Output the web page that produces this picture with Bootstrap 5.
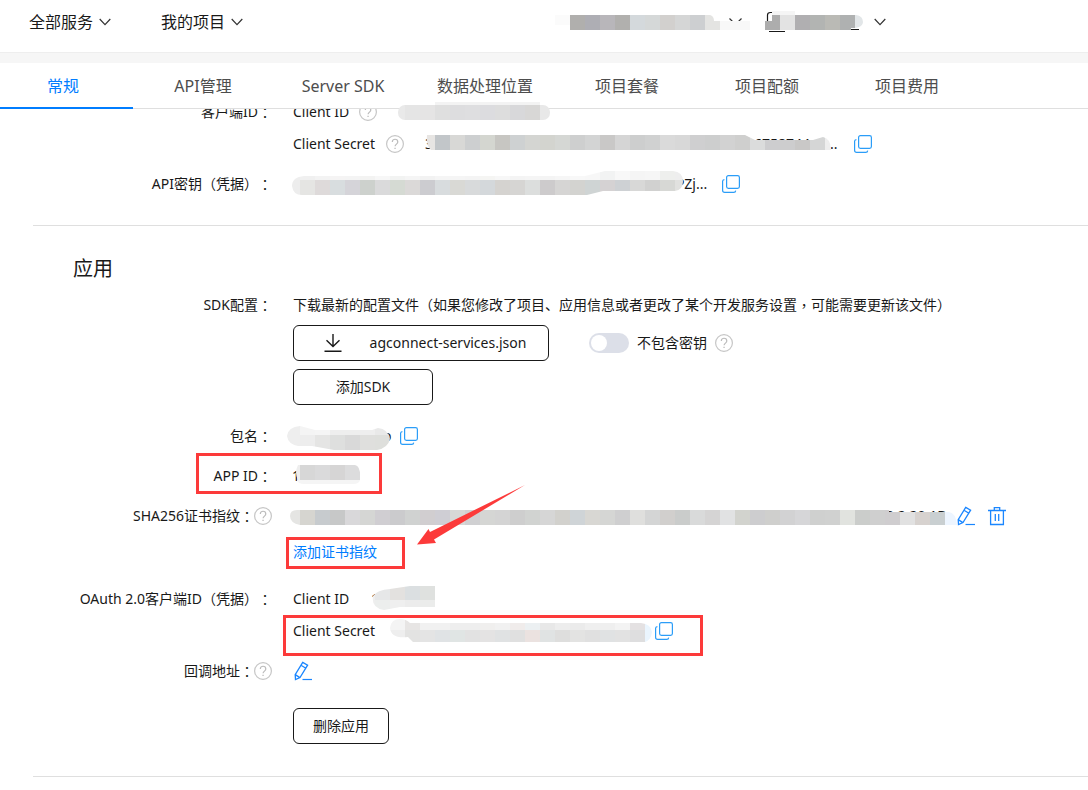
<!DOCTYPE html>
<html lang="zh-CN">
<head>
<meta charset="utf-8">
<meta name="viewport" content="width=device-width, initial-scale=1">
<title>项目设置</title>
<link href="https://cdn.jsdelivr.net/npm/bootstrap@5.3.0/dist/css/bootstrap.min.css" rel="stylesheet">
<style>
  body { font-family: "Noto Sans", "Noto Sans CJK SC", sans-serif; font-size: 14px; line-height: 24px; color: #191919; background: #fff; overflow-x: hidden; }
  a { color: #007dff; text-decoration: none; }
  svg { flex: none; overflow: visible; }
  svg text { font-size: 14px; fill: #191919; }
  .punct { font-family: "Noto Sans CJK TC", sans-serif; line-height: 1; }

  .topbar { height: 52px; padding: 0 202px 8px 29px; }
  .menu-btn { border: 0; background: none; padding: 0; font-size: 16px; color: #191919; display: flex; align-items: center; gap: 6px; white-space: nowrap; }
  .menu-gap { gap: 50px; }
  .strip { height: 11px; background: #f6f6f6; border-top: 1px solid #eee; }

  .tabs { height: 46px; border-bottom: 1px solid #dfdfdf; background: #fff; z-index: 1; }
  .tabs a { min-width: 140px; padding: 0 24px; font-size: 16px; line-height: 46px; height: 46px; color: #4d4d4d; text-align: center; white-space: nowrap; }
  .tabs a.active { min-width: 133px; padding: 0 31px 0 24px; color: #007dff; border-bottom: 2px solid #007dff; }

  .sheet { margin-top: -9px; }
  .field { display: flex; gap: 21px; margin-bottom: 16px; position: relative; white-space: nowrap; }
  .field-name { width: 272px; flex: none; display: flex; justify-content: flex-end; align-items: center; height: 24px; }
  .line { display: flex; align-items: center; height: 24px; position: relative; }
  .key-id { width: 58px; }
  .key-secret { width: 85px; }
  .over { z-index: 2; position: relative; }
  .rule { margin: 29px 0 0 33px; height: 1px; background: #dfdfdf; }
  .title { font-size: 20px; line-height: 30px; font-weight: 400; margin: 28px 0 9px 73px; }
  .sdk-field { margin-bottom: 19px; }
  .cert-field { margin-bottom: 23px; }
  .cert-link { margin-top: 12px; }
  .callback-field { margin-bottom: 25px; }
  .rule-end { margin-top: 32px; }

  .icon-btn { border: 0; background: none; padding: 0; display: flex; }
  .icon-pair { gap: 13px; }
  .box-btn { height: 36px; border: 1px solid #191919; border-radius: 6px; background: #fff; color: #191919; font-size: 14px; padding: 0; display: flex; align-items: center; justify-content: center; }
  .w-json { width: 256px; gap: 28px; padding-left: 8px; }
  .w-sdk { width: 140px; }
  .w-del { width: 96px; }
  .sdk-switch { margin-left: 40px; }
  .form-switch .toggle { width: 40px; height: 20px; margin: 0; border: 0; background-color: #dcdfe8; float: none; background-size: 18px 18px; background-position: 1px center; background-image: url("data:image/svg+xml,%3csvg xmlns='http://www.w3.org/2000/svg' viewBox='0 0 18 18'%3e%3ccircle cx='9' cy='9' r='8' fill='white'/%3e%3c/svg%3e"); }

  /* annotations lying over the form */
  .frame { position: absolute; border: 3px solid #fc3a3a; pointer-events: none; }
  .frame-app { left: 196px; top: -11px; width: 186px; height: 41px; }
  .frame-link { left: -7px; top: -3px; width: 119px; height: 32px; }
  .frame-secret { left: -10px; top: -4px; width: 420px; height: 41px; }
  .arrow { position: absolute; left: 124px; top: -55px; }
</style>
</head>
<body>
<svg width="0" height="0" class="position-absolute" aria-hidden="true">
  <defs>
    <symbol id="chev" viewBox="0 0 12 8"><path d="M.7 1 6 6.600 11.300 1" fill="none" stroke="#333" stroke-width="1.200"/></symbol>
    <symbol id="help" viewBox="0 0 18 18"><circle cx="9" cy="9" r="8.400" fill="none" stroke="#c6c6c6" stroke-width="1.200"/><path d="M6.300 7c0-3.700 5.500-3.700 5.500 0 0 2-2.700 2.200-2.700 4.300" fill="none" stroke="#bcbcbc" stroke-width="1.200"/><path d="M8.400 12.800h1.300v1.300H8.400z" fill="#bcbcbc"/></symbol>
    <symbol id="copy" viewBox="0 0 18 18"><rect x="4.600" y=".6" width="12.800" height="12.800" rx="1.800" fill="none" stroke="#2b9df8" stroke-width="1.200"/><path d="M2.400 4.600Q.6 4.700.6 6.300v9q0 2.100 2.100 2.100h9q1.900 0 2-1.800" fill="none" stroke="#2b9df8" stroke-width="1.200"/></symbol>
    <symbol id="pen" viewBox="0 0 18 20"><path d="M8.700 1.400 13.600 4.200 6 16.600 1.500 18.500 1.200 13.600zM7 4.300l4.900 2.900M1.200 13.600l4.700 3" fill="none" stroke="#1a86ff" stroke-width="1.300"/><path d="M8.500 18.500H18" stroke="#1a86ff" stroke-width="1.200"/></symbol>
    <symbol id="bin" viewBox="0 0 18 20"><path d="M0 4.500h18M2.600 4.500v14h12.800v-14M6.300 4.500V1.700h5.400v2.800M7.300 8v7M10.700 8v7" fill="none" stroke="#1a86ff" stroke-width="1.300"/></symbol>
  </defs>
</svg>

<header class="topbar d-flex align-items-center justify-content-between">
  <div class="d-flex menu-gap">
    <button type="button" class="menu-btn">全部服务<svg width="12" height="8"><use href="#chev"/></svg></button>
    <button type="button" class="menu-btn">我的项目<svg width="12" height="8"><use href="#chev"/></svg></button>
  </div>
  <div class="d-flex">
    <button type="button" class="menu-btn" aria-label="项目">
      <svg width="210" height="24" viewBox="555 10 210 24">
        <path d="M729.500 18.500l6 6 6-6" fill="none" stroke="#333" stroke-width="1.200"/>
        <path d="M731 15h9v4h-9z" fill="#fff"/>
        <clipPath id="m1"><path d="M555 15h155q4 1 4 6h36v9H570v-5h-15z"/></clipPath>
        <g clip-path="url(#m1)"><g class="cells" data-x="555" data-y="15" data-h="15" data-c="fbfbfb b0afad aeaeb4 b8b6ba b1b0ae d4d9dc d5d8d8 d2d0ce d5d6d6 cdcfd1 e4e4e2 f8f8f8 f8f8f8"/></g>
      </svg>
    </button>
    <button type="button" class="menu-btn" aria-label="应用">
      <svg width="103" height="24" viewBox="765 10 103 24">
        <path d="M767.500 22v-7q0-2.500 3-2.500h2M769 31.500h16M845 29.500h14" fill="none" stroke="#191919" stroke-width="1.200"/>
        <path d="M772 11h23v4h-23z" fill="#f5f5f5"/>
        <clipPath id="m2"><path d="M765 21h7v-6h84q7 1 7 7 0 5-8 6h-4v2h-86z"/></clipPath>
        <g class="cells" clip-path="url(#m2)" data-x="765" data-y="15" data-h="15" data-c="adadad e3e3e3 b0afb1 b2b4b2 babab5 afb1b1 e2e6e8"/>
      </svg><svg width="12" height="8"><use href="#chev"/></svg>
    </button>
  </div>
</header>
<div class="strip"></div>

<nav class="tabs d-flex position-relative">
  <a href="#" class="active">常规</a>
  <a href="#">API管理</a>
  <a href="#">Server SDK</a>
  <a href="#">数据处理位置</a>
  <a href="#">项目套餐</a>
  <a href="#">项目配额</a>
  <a href="#">项目费用</a>
</nav>

<main class="sheet">
  <section>
    <div class="field">
      <div class="field-name">客户端ID<span class="punct">：</span></div>
      <div class="d-flex flex-column gap-2">
        <div class="line"><span class="key-id">Client ID</span>
          <svg class="ms-2" width="18" height="18"><use href="#help"/></svg>
          <svg class="over" width="172" height="24" viewBox="377 100 172 24">
            <path d="M435 102h105v6H435z" fill="#f3f3f3"/>
            <clipPath id="m3"><rect x="398" y="105" width="152" height="15" rx="7"/></clipPath>
            <g class="cells" clip-path="url(#m3)" data-x="390" data-y="105" data-h="15" data-c="e9e9e9 e5e5e5 e5e4e4 dfdfdf dddddf dedee0 dcdcdf dddddd d8d8da d8d7d6 e8e8e8"/>
          </svg>
        </div>
        <div class="line"><span class="key-secret">Client Secret</span>
          <svg class="ms-2" width="18" height="18"><use href="#help"/></svg>
          <svg width="450" height="24" viewBox="404 132 450 24">
            <text x="425" y="149">3</text><text x="754" y="149">6758744</text><text x="830" y="149">..</text>
            <clipPath id="m4"><path d="M427 135h318l10 5h58l10-3q7 1 8 12v1H431q-5-4-4-15z"/></clipPath>
            <g class="cells" clip-path="url(#m4)" data-x="420" data-y="135" data-h="15" data-c="e7e5e3 c2c6c9 d8d8d6 cdcfd0 d4d6d0 c7c6c2 ced1d2 d4d5d2 d3d4cf d5d7d4 cecfcf d3d4d4 c9c8c7 d5d5d5 cdcece d0d1d1 dadada d8d8d8 cfcfd0 cdcece d2d2d2 cfcfce dbdcdc cdcdcf cdcdce c9c8c7 d5d6d6 eee"/>
          </svg>
          <button type="button" class="icon-btn" aria-label="复制"><svg width="18" height="18"><use href="#copy"/></svg></button>
        </div>
      </div>
    </div>
    <div class="field mb-0">
      <div class="field-name">API密钥（凭据）<span class="punct">：</span></div>
      <div class="line">
        <svg width="429" height="24" viewBox="293 172 429 24">
          <text x="676" y="189">PZj...</text>
          <clipPath id="m5"><path d="M292 186q0-9 12-10h281l20-5h68q10 1 10 10 0 9-8 10h-72l-16 4H302q-9 0-10-9z"/></clipPath>
          <g clip-path="url(#m5)">
            <g class="cells" data-x="285" data-y="165" data-h="15" data-c="eee f0f0f0 f3f3f3 f5f4f4 f4f4f4 f3f3f2 f7f7f7 f2f3f2 f5f5f5 f2f2f2 f5f5f5 f5f5f5 f4f4f4 f5f5f3 f7f7f7 f4f4f4 f5f5f5 f4f4f4 f6f6f6 f8f8f8 f7f7f7 f2f3f3 f8f8f8 f5f5f5 f6f6f6 eeefed eee"/>
            <g class="cells" data-x="285" data-y="180" data-h="15" data-c="ededed e5e5e3 dedada d8dddf d5d4d9 cdd1cd dadadb d5dad3 dbd9d8 ccccd0 d8dcde d9d9d5 d8dadb d4d8db d5d3d0 d6d5d3 dcdedd cdcbcc d6d5d4 d3d3d0 cfd4d4 d5d2d3 ced1d4 d8d8d7 d1d1d0 d7d8d5 e1e1df"/>
          </g>
        </svg>
        <button type="button" class="icon-btn" aria-label="复制"><svg width="18" height="18"><use href="#copy"/></svg></button>
      </div>
    </div>
    <hr class="rule border-0 opacity-100">
  </section>

  <section>
    <h2 class="title">应用</h2>
    <div class="field sdk-field">
      <div class="field-name">SDK配置<span class="punct">：</span></div>
      <div class="d-flex flex-column gap-2">
        <div class="line">下载最新的配置文件（如果您修改了项目、应用信息或者更改了某个开发服务设置<span class="punct">，</span>可能需要更新该文件）</div>
        <div class="d-flex align-items-center">
          <button type="button" class="box-btn w-json"><svg width="18" height="18" viewBox="0 0 18 18"><path d="M9 0v12.500M2.500 6.300 9 12.500l6.500-6.200M.5 17.200h17" fill="none" stroke="#191919" stroke-width="1.400"/></svg>agconnect-services.json</button>
          <div class="form-check form-switch d-flex align-items-center gap-2 p-0 mb-0 sdk-switch">
            <input class="form-check-input toggle" type="checkbox" role="switch" id="nokey"><label for="nokey">不包含密钥</label>
            <svg width="18" height="18"><use href="#help"/></svg>
          </div>
        </div>
        <button type="button" class="box-btn w-sdk">添加SDK</button>
      </div>
    </div>
    <div class="field">
      <div class="field-name">包名<span class="punct">：</span></div>
      <div class="line">
        <svg width="107" height="24" viewBox="293 424 107 24">
          <text x="383" y="441">o</text>
          <clipPath id="m6"><path d="M287 436q1-9 13-10l15 4h57l6-2q10 1 12 11-2 9-13 11h-43l-22-4h-14q-10-2-11-10z"/></clipPath>
          <g clip-path="url(#m6)">
            <g class="cells" data-x="285" data-y="425" data-h="10" data-c="eee f4f4f4 f5f5f5 eee eee eee e9e9e9"/>
            <g class="cells" data-x="285" data-y="435" data-h="15" data-c="eee ededed e5e5e4 dedfde d9d9d9 dfdfdd dedfdc"/>
          </g>
        </svg>
        <button type="button" class="icon-btn" aria-label="复制"><svg width="18" height="18"><use href="#copy"/></svg></button>
      </div>
    </div>
    <div class="field">
      <div class="field-name">APP ID<span class="punct">：</span></div>
      <div class="line">
        <svg width="68" height="24" viewBox="293 464 68 24">
          <text x="292" y="481">1</text>
          <path d="M297 480h63q-1 4-7 4h-49q-6 0-7-4z" fill="#f5f5f5"/>
          <clipPath id="m7"><path d="M298 465h57q6 1 5 15h-62q-4-7 0-15z"/></clipPath>
          <g class="cells" clip-path="url(#m7)" data-x="285" data-y="465" data-h="15" data-c="eee d7d7d7 dadadb d6d5d5 dcdcdd"/>
        </svg>
      </div>
      <div class="frame frame-app"></div>
    </div>
    <div class="field cert-field">
      <div class="field-name">SHA256证书指纹<span class="punct">：</span><svg width="18" height="18"><use href="#help"/></svg></div>
      <div>
        <div class="line">
          <svg width="664" height="24" viewBox="293 504 664 24">
            <text x="886" y="521">0:2:20:1D</text>
            <clipPath id="m8"><path d="M290 516q0-6 7-6h592v2h60q7 1 8 13H300q-10-2-10-9z"/></clipPath>
            <g clip-path="url(#m8)">
              <g class="cells" data-x="285" data-y="510" data-h="15" data-c="e5e5e3 d6d5d0 c7cbce c7c8c8 d9d8da d5d6d4 d0ced2 cbcbcd d0d2d1 d1ced0 cfced4 d7d8d6 d0d0d2 d5d6d4 d4d4d4 cecece d1d3d1 d6d6d6 d2d1cd cfd4d7 d8d7d3 d5d6d4 cfcfd0 dfdfdd d4d5d5 d1cfcd cacccb d9dada d5d4d4 e1e2e3 d2d3ce cdcdcf cfcfcd d2d2d3 d6d6d8 cfd0cf d0d1d0 e1e3df cbcdcb cfcfcf cfcdcf e1e1e1 d7d2cf c9cfd1 edf5ff"/>
            </g>
          </svg>
          <div class="d-flex icon-pair">
            <button type="button" class="icon-btn" aria-label="编辑"><svg width="18" height="20"><use href="#pen"/></svg></button>
            <button type="button" class="icon-btn" aria-label="删除"><svg width="18" height="20"><use href="#bin"/></svg></button>
          </div>
        </div>
        <div class="line cert-link">
          <a href="#">添加证书指纹</a>
          <div class="frame frame-link"></div>
          <svg class="arrow" width="108" height="60" viewBox="417 485 108 60" aria-hidden="true"><path d="M525 485 434 539.500 436 543 417 544.500 428.500 529 430 532z" fill="#fc3a3a"/></svg>
        </div>
      </div>
    </div>
    <div class="field">
      <div class="field-name">OAuth 2.0客户端ID（凭据）<span class="punct">：</span></div>
      <div class="d-flex flex-column gap-2">
        <div class="line"><span class="key-id">Client ID</span>
          <svg width="84" height="24" viewBox="351 587 84 24">
            <text x="371" y="604">1</text>
            <clipPath id="m9"><path d="M373 596q4-6 17-7l20-3h25v21h-35l-16 3q-13-2-11-14z"/></clipPath>
            <g clip-path="url(#m9)">
              <g class="cells" data-x="360" data-y="585" data-h="15" data-c="eee e6e7e8 e3e1df dbdfe1 dfe1df"/>
              <g class="cells" data-x="360" data-y="600" data-h="15" data-c="eee eceeed efefef ececec ebeceb"/>
            </g>
          </svg>
        </div>
        <div class="line"><span class="key-secret">Client Secret</span>
          <svg width="277" height="24" viewBox="378 619 277 24">
            <clipPath id="m10"><path d="M390 628q1-9 10-9 6 0 10 4h231q10 1 11 9-1 8-7 10H413l-5-5q-17 2-18-9z"/></clipPath>
            <g clip-path="url(#m10)">
              <g class="cells" data-x="390" data-y="615" data-h="15" data-c="f4f4f4 e7e5e4 f1f1f1 f1f1f1 eee eee f0efee f1f1f1 f0eceb ecf0f2 e8e8e8 ededed ebebeb efefef efefef f3f3f3 e4e1e2 eaf5fe"/>
              <g class="cells" data-x="390" data-y="630" data-h="15" data-c="eee e3e3e2 e4e4e4 e0e3e5 e0e5e4 e2e2e2 e4e3e3 e0e2e3 e0e0e0 ebe2e0 e0e3e3 dededd e3e3e2 e0e0e0 e0e2e3 e2e2e2 dededf eaf5fe"/>
            </g>
          </svg>
          <button type="button" class="icon-btn" aria-label="复制"><svg width="18" height="18"><use href="#copy"/></svg></button>
          <div class="frame frame-secret"></div>
        </div>
      </div>
    </div>
    <div class="field callback-field">
      <div class="field-name">回调地址<span class="punct">：</span><svg width="18" height="18"><use href="#help"/></svg></div>
      <div class="line"><button type="button" class="icon-btn" aria-label="编辑"><svg width="20" height="20"><use href="#pen"/></svg></button></div>
    </div>
    <div class="field mb-0">
      <div class="field-name"></div>
      <button type="button" class="box-btn w-del">删除应用</button>
    </div>
    <hr class="rule rule-end border-0 opacity-100">
  </section>
</main>

<script src="https://cdn.jsdelivr.net/npm/bootstrap@5.3.0/dist/js/bootstrap.bundle.min.js"></script>
<script>
  // Fill each redaction strip with its row of 15px cells.
  document.querySelectorAll('.cells').forEach(function (g) {
    g.dataset.c.split(' ').forEach(function (c, i) {
      var r = document.createElementNS('http://www.w3.org/2000/svg', 'rect');
      r.setAttribute('x', +g.dataset.x + i * 15);
      r.setAttribute('y', g.dataset.y);
      r.setAttribute('width', 15);
      r.setAttribute('height', g.dataset.h);
      r.setAttribute('fill', '#' + c);
      r.setAttribute('shape-rendering', 'crispEdges');
      g.appendChild(r);
    });
  });
</script>
</body>
</html>
